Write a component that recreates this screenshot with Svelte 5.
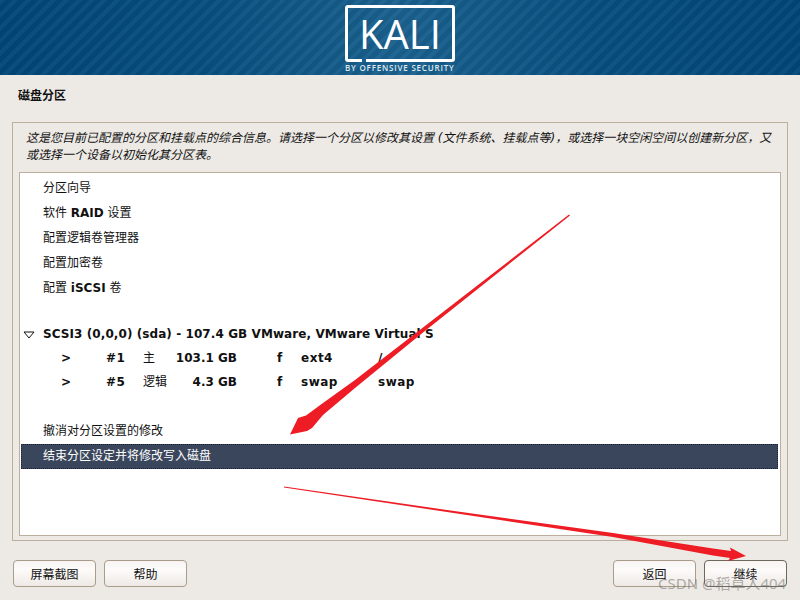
<script>
  const rows = [
    { id: 'part1', cols: ['>', '#1', '主', '103.1 GB', 'f', 'ext4', '/'] },
    { id: 'part5', cols: ['>', '#5', '逻辑', '4.3 GB', 'f', 'swap', 'swap'] }
  ];
</script>

<div class="page">
  <header class="banner">
    <div class="logo">
      <div class="logo-box"><span class="kali">KALI</span><span class="notch"></span></div>
      <div class="tag">BY OFFENSIVE SECURITY</div>
    </div>
  </header>

  <h1 class="title">磁盘分区</h1>

  <main class="frame">
    <p class="desc">这是您目前已配置的分区和挂载点的综合信息。请选择一个分区以修改其设置 (文件系统、挂载点等)，或选择一块空闲空间以创建新分区，又或选择一个设备以初始化其分区表。</p>
    <div class="list">
      <div class="row">分区向导</div>
      <div class="row">软件 <b>RAID</b> 设置</div>
      <div class="row">配置逻辑卷管理器</div>
      <div class="row">配置加密卷</div>
      <div class="row">配置 <b>iSCSI</b> 卷</div>
      <div class="row spacer"></div>
      <div class="row disk">
        <svg class="tri" width="12" height="8" viewBox="0 0 12 8"><path d="M1 1 H11 L6 7 Z" fill="none" stroke="#111" stroke-width="1"/></svg>
        SCSI3 (0,0,0) (sda) - 107.4 GB VMware, VMware Virtual S
      </div>
      {#each rows as r}
        <div class="row part">
          <span class="c0">{r.cols[0]}</span>
          <span class="c1">{r.cols[1]}</span>
          <span class="c2">{r.cols[2]}</span>
          <span class="c3">{r.cols[3]}</span>
          <span class="c4">{r.cols[4]}</span>
          <span class="c5">{r.cols[5]}</span>
          <span class="c6">{r.cols[6]}</span>
        </div>
      {/each}
      <div class="row spacer wide"></div>
      <div class="row">撤消对分区设置的修改</div>
      <div class="row selected">结束分区设定并将修改写入磁盘</div>
    </div>
  </main>

  <footer class="actions">
    <button>屏幕截图</button>
    <button>帮助</button>
    <span class="grow"></span>
    <button>返回</button>
    <button class="primary">继续</button>
  </footer>

  <svg class="annot" width="800" height="600" viewBox="0 0 800 600">
    <path d="M569 214.5 L423 327.5 L355 380 L323 403 L306 415.5 L298 418 L290 434.5 L307 431 L312 428 L323 415 L355 388 L423 332.5 L570 215.5 Z" fill="#ee1c25"/>
    <path d="M284 486.5 L447 510 L613 533 L713 548.5 L731 551 L730 547.5 L746 556 L728 561 L730 558 L713 555.5 L613 537 L447 512 L284 487.5 Z" fill="#ee1c25"/>
  </svg>
  <div class="watermark">CSDN @稻草人404</div>
</div>

<style>
  :global(body) { margin: 0; background: #edeae5; }
  .page {
    width: 800px; height: 600px; position: relative; overflow: hidden;
    background: #edeae5; color: #111;
    font-family: "DejaVu Sans", "Noto Sans CJK SC", sans-serif; font-size: 12px;
    display: flex; flex-direction: column;
  }
  .banner {
    height: 75px; flex: none; display: flex; justify-content: center;
    background:
      repeating-linear-gradient(135deg, rgba(255,255,255,.03) 0 4px, rgba(0,0,0,.05) 4px 9px),
      linear-gradient(90deg, #02477a 0%, #07507f 25%, #1b6290 50%, #07507f 75%, #02477a 100%);
  }
  .logo { width: 110px; padding-top: 5px; display: flex; flex-direction: column; }
  .logo-box {
    height: 57px; border: 3px solid #fff; border-radius: 3px; box-sizing: border-box;
    position: relative; display: flex; align-items: center; justify-content: center;
  }
  .kali { font-family: "Open Sans", "Noto Sans", sans-serif; font-size: 40px; font-weight: 500; line-height: 1; color: #fff; }
  .notch { position: absolute; left: 14px; bottom: -3px; width: 4px; height: 3px; background: #1a618f; }
  .tag { font-family: "Open Sans", sans-serif; font-size: 8px; font-weight: 600; color: #dfe8ef; letter-spacing: .8px; margin-top: 1px; white-space: nowrap; line-height: 10px; }
  .title { margin: 13px 0 0 18px; font-size: 12px; font-weight: 700; line-height: 16px; height: 16px; flex: none; }
  .frame {
    margin: 18px 12px 0 12px; height: 419px; box-sizing: border-box; flex: none;
    border: 1px solid #bcae9c; padding: 0 6px 4px 6px; display: flex; flex-direction: column;
  }
  .desc { margin: 7px 0 8px 7px; font-size: 12px; line-height: 17px; font-style: italic; height: 34px; width: 750px; flex: none; }
  .list {
    flex: 1; background: #fff; border: 1px solid #bcae9c; padding: 2px 2px 2px 1px;
    display: flex; flex-direction: column; min-height: 0;
  }
  .row { height: 24.8px; line-height: 24.8px; flex: none; padding-left: 22px; white-space: nowrap; box-sizing: border-box; position: relative; }
  .row:first-child { margin-top: 1.4px; }
  .spacer { height: 21.6px; }
  .spacer.wide { height: 24px; }
  .disk { font-weight: 700; letter-spacing: .08px; height: 23.6px; line-height: 24.8px; }
  .tri { position: absolute; left: 2px; top: 9px; }
  .selected { background: #3a465c; color: #fff; outline: 1px dotted #1a2233; outline-offset: -1px; height: 25px; }
  .part { font-weight: 700; letter-spacing: .5px; }
  .part span { position: absolute; top: 0; }
  .c0 { left: 40px; } .c1 { left: 85px; } .c2 { left: 122px; font-weight: 400; letter-spacing: 0; }
  .c3 { left: 134px; width: 82px; text-align: right; letter-spacing: 0; }
  .c4 { left: 256px; } .c5 { left: 280px; } .c6 { left: 357px; }
  .actions { display: flex; gap: 8px; padding: 19px 13px 0 13px; }
  .grow { flex: 1; }
  button {
    width: 83px; height: 27px; border: 1px solid #a99c8a; border-radius: 4px;
    background: linear-gradient(#f7f4f2, #fdfbfa 35%, #eee9e5);
    font: inherit; color: #111; padding: 0;
  }
  .primary { border-color: #6f675c; }
  .annot { position: absolute; inset: 0; pointer-events: none; }
  .watermark {
    position: absolute; left: 658px; top: 572px; font-family: "Noto Sans", "Noto Sans CJK SC", sans-serif;
    font-size: 15px; color: rgba(110,110,110,.55); white-space: nowrap;
  }
</style>
